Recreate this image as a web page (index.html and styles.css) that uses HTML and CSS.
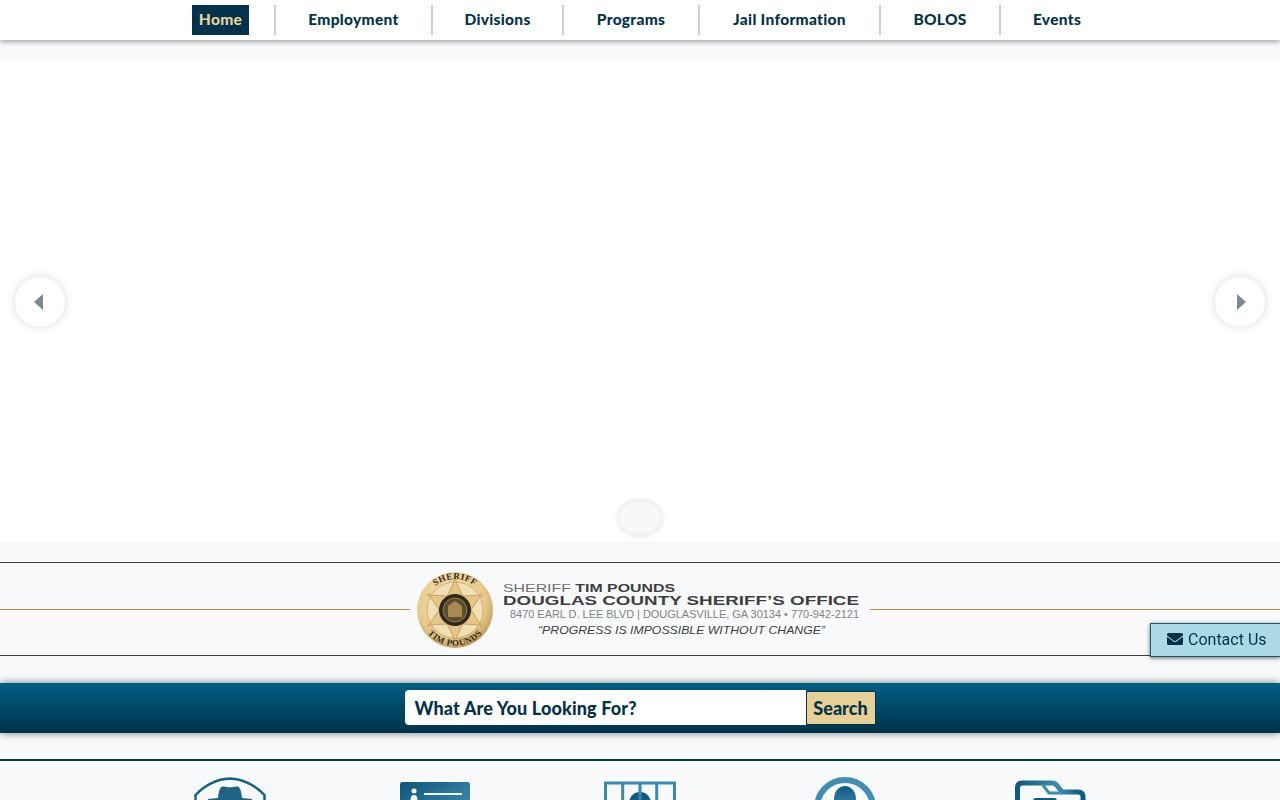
FILE: index.html
```html
<!DOCTYPE html>
<html lang="en">
<head>
    <meta charset="UTF-8">
    <meta name="viewport" content="width=device-width, initial-scale=1.0">
    <title>Douglas County Sheriff's Office</title>
    <link rel="stylesheet" href="styles.css">
</head>
<body>
    <!-- Top navigation -->
    <nav class="main-nav">
        <a class="nav-home" href="#">Home</a>
        <a class="nav-link" href="#">Employment</a>
        <a class="nav-link" href="#">Divisions</a>
        <a class="nav-link" href="#">Programs</a>
        <a class="nav-link" href="#">Jail Information</a>
        <a class="nav-link" href="#">BOLOS</a>
        <a class="nav-link" href="#">Events</a>
    </nav>

    <!-- Slider (image not loaded) -->
    <section class="slider">
        <button class="slider-btn slider-prev" type="button" aria-label="Previous"><span class="arrow-left"></span></button>
        <button class="slider-btn slider-next" type="button" aria-label="Next"><span class="arrow-right"></span></button>
        <span class="slider-dot"></span>
    </section>

    <!-- Logo banner -->
    <section class="logo-banner">
        <div class="logo-line"></div>
        <svg class="logo" width="460" height="92" viewBox="0 0 460 92">
            <defs>
                <radialGradient id="gold" cx="45%" cy="40%" r="65%">
                    <stop offset="0" stop-color="#f8e8bd"/>
                    <stop offset="0.7" stop-color="#e6ca8c"/>
                    <stop offset="1" stop-color="#b98f4e"/>
                </radialGradient>
                <path id="badgeTop" d="M14 47 A31 31 0 0 1 76 47"/>
                <path id="badgeBottom" d="M9 47 A36 36 0 0 0 81 47"/>
            </defs>
            <circle cx="45" cy="47" r="38" fill="url(#gold)"/>
            <circle cx="45" cy="47" r="28" fill="#f1e0b6" stroke="#c9a566" stroke-width="0.8"/>
            <polygon points="45,17 53,33 71,32 61,47 71,62 53,61 45,77 37,61 19,62 29,47 19,32 37,33" fill="#e5c684" stroke="#a98148" stroke-width="0.6"/>
            <circle cx="45" cy="17" r="2" fill="#d9b26b"/>
            <circle cx="71" cy="32" r="2" fill="#d9b26b"/>
            <circle cx="71" cy="62" r="2" fill="#d9b26b"/>
            <circle cx="45" cy="77" r="2" fill="#d9b26b"/>
            <circle cx="19" cy="62" r="2" fill="#d9b26b"/>
            <circle cx="19" cy="32" r="2" fill="#d9b26b"/>
            <circle cx="45" cy="47" r="16" fill="#2e2a20"/>
            <circle cx="45" cy="47" r="12" fill="#5b4d2f" stroke="#c9a566" stroke-width="0.6"/>
            <path d="M38 54 V43 L45 38 L52 43 V54 Z" fill="#a98a50"/>
            <text class="badge-text"><textPath href="#badgeTop" startOffset="50%" text-anchor="middle">SHERIFF</textPath></text>
            <text class="badge-text"><textPath href="#badgeBottom" startOffset="50%" text-anchor="middle">TIM POUNDS</textPath></text>
            <text class="logo-name" x="93" y="29" textLength="172" lengthAdjust="spacingAndGlyphs"><tspan class="logo-light">SHERIFF</tspan> TIM POUNDS</text>
            <text class="logo-office" x="93" y="42" textLength="356" lengthAdjust="spacingAndGlyphs">DOUGLAS COUNTY SHERIFF’S OFFICE</text>
            <text class="logo-address" x="100" y="55" textLength="349" lengthAdjust="spacingAndGlyphs">8470 EARL D. LEE BLVD | DOUGLASVILLE, GA 30134 • 770-942-2121</text>
            <text class="logo-motto" x="128" y="71" textLength="287" lengthAdjust="spacingAndGlyphs">“PROGRESS IS IMPOSSIBLE WITHOUT CHANGE”</text>
        </svg>
        <div class="logo-line"></div>
    </section>

    <!-- Search -->
    <section class="search-bar">
        <div class="search-input">What Are You Looking For?</div>
        <button class="search-btn" type="button">Search</button>
    </section>

    <hr class="divider">

    <!-- Quick links -->
    <section class="quick-links">
        <svg width="72" height="80" viewBox="0 0 72 80">
            <defs>
                <linearGradient id="dark" x1="0" y1="0" x2="0" y2="1">
                    <stop offset="0" stop-color="#115a7e"/>
                    <stop offset="1" stop-color="#3f8fb5"/>
                </linearGradient>
            </defs>
            <path d="M1.5 19 C12 8 24 3 36 2.5 C48 3 60 8 70.5 19 V50 C66 64 50 74 36 78 C22 74 6 64 1.5 50 Z" fill="none" stroke="#0f6488" stroke-width="2.5"/>
            <path d="M24 22 C25 12 27 10 30 10.5 C33 11.5 39 11.5 42 10.5 C45 10 47 12 48 22 L58 23 Q58 27 48 27 H24 Q14 27 14 23 Z" fill="#1f6487"/>
            <path d="M25 30 H47 V36 Q36 42 25 36 Z" fill="url(#dark)"/>
        </svg>
        <svg width="72" height="80" viewBox="0 0 72 80">
            <defs>
                <linearGradient id="card" x1="0" y1="0" x2="1" y2="1">
                    <stop offset="0" stop-color="#0f5579"/>
                    <stop offset="1" stop-color="#4b9cc3"/>
                </linearGradient>
            </defs>
            <rect x="1" y="6" width="70" height="52" rx="2.5" fill="url(#card)"/>
            <circle cx="15" cy="15" r="2.5" fill="#fff"/>
            <path d="M11.5 24 Q11.5 19 15 19 Q18.5 19 18.5 24 Z" fill="#fff"/>
            <rect x="25" y="17" width="38" height="2" fill="#fff"/>
            <rect x="25" y="29" width="38" height="2" fill="#fff"/>
        </svg>
        <svg width="72" height="80" viewBox="0 0 72 80">
            <circle cx="36" cy="27" r="11" fill="#115a7e"/>
            <path d="M1.5 66 V7 H70.5 V66 M18.7 7 V66 M36 7 V66 M52.7 7 V66" fill="none" stroke="#3a8ab0" stroke-width="3"/>
        </svg>
        <svg width="72" height="80" viewBox="0 0 72 80">
            <circle cx="36" cy="32" r="28" fill="none" stroke="#3f8fb5" stroke-width="6"/>
            <ellipse cx="36" cy="23" rx="11" ry="13" fill="url(#dark)"/>
        </svg>
        <svg width="72" height="80" viewBox="0 0 72 80">
            <defs>
                <linearGradient id="folder" x1="0" y1="0" x2="1" y2="0">
                    <stop offset="0" stop-color="#0c5a7e"/>
                    <stop offset="0.6" stop-color="#3d8db3"/>
                    <stop offset="1" stop-color="#0c5a7e"/>
                </linearGradient>
            </defs>
            <path d="M3.5 60 V12 Q3.5 7 8.5 7 H38 Q41 7 43 9.5 L48 16 H64 Q69 16 69 21 V60" fill="none" stroke="url(#folder)" stroke-width="5"/>
            <path d="M28 8 L35 17 H48" fill="none" stroke="#3d8db3" stroke-width="3"/>
            <rect x="19" y="22" width="24" height="8" rx="3" fill="#0c5a7e"/>
        </svg>
    </section>

    <!-- Floating contact tab -->
    <a class="contact-tab" href="#">
        <svg class="contact-icon" viewBox="0 0 512 512" width="16" height="16"><path d="M502.3 190.8c3.9-3.1 9.7-.2 9.7 4.7V400c0 26.5-21.5 48-48 48H48c-26.5 0-48-21.5-48-48V195.6c0-5 5.7-7.8 9.7-4.7 22.4 17.4 52.1 39.5 154.1 113.6 21.1 15.4 56.7 47.8 92.2 47.6 35.7.3 72-32.8 92.3-47.6 102-74.1 131.6-96.3 154-113.7zM256 320c23.2.4 56.6-29.2 73.4-41.4 132.7-96.3 142.8-104.7 173.4-128.7 5.8-4.5 9.2-11.5 9.2-18.9v-19c0-26.5-21.5-48-48-48H48C21.5 64 0 85.5 0 112v19c0 7.4 3.4 14.3 9.2 18.9 30.6 23.9 40.7 32.4 173.4 128.7 16.8 12.2 50.2 41.8 73.4 41.4z"/></svg>
        Contact Us
    </a>
</body>
</html>
```

FILE: styles.css
```css
html, body {
    height: 800px;
    overflow: hidden;
}

body {
    margin: 0;
    font-family: 'Lato', sans-serif;
    background-color: #f8f9fa;
    color: #03334a;
}

a {
    text-decoration: none;
}

/* Top navigation */
.main-nav {
    height: 40px;
    box-sizing: border-box;
    padding: 5px 0 5px 192px;
    background: white;
    box-shadow: 0 2px 5px rgba(0, 0, 0, 0.35);
    display: grid;
    grid-template-columns: 82px 157px 131px 136px 181px 120px 114px;
    position: relative;
}

.nav-home,
.nav-link {
    font-size: 15.5px;
    font-weight: 900;
    letter-spacing: 0.3px;
    line-height: 28px;
    color: #03334a;
}

.nav-home {
    width: 57px;
    text-align: center;
    background-color: #03334a;
    color: #e8d197;
}

.nav-link {
    border-left: 2px solid #c4d0da;
    text-align: center;
}

/* Slider */
.slider {
    position: relative;
    height: 480px;
    margin-top: 22px;
    background: white;
}

.slider-btn {
    position: absolute;
    top: 215px;
    width: 50px;
    height: 50px;
    padding: 0;
    border: none;
    border-radius: 50%;
    background: white;
    box-shadow: 0 0 10px rgba(0, 0, 0, 0.16);
    display: flex;
    align-items: center;
    justify-content: center;
}

.slider-prev {
    left: 15px;
}

.slider-next {
    right: 15px;
}

.arrow-left,
.arrow-right {
    width: 0;
    height: 0;
    border-top: 8px solid transparent;
    border-bottom: 8px solid transparent;
}

.arrow-left {
    border-right: 9px solid #7b8a8f;
    margin-right: 3px;
}

.arrow-right {
    border-left: 9px solid #7b8a8f;
    margin-left: 2px;
}

.slider-dot {
    position: absolute;
    left: 619px;
    top: 439px;
    width: 42px;
    height: 34px;
    border-radius: 50%;
    background: #f8f8f8;
    box-shadow: 0 0 6px rgba(0, 0, 0, 0.16);
}

/* Logo banner */
.logo-banner {
    margin-top: 20px;
    height: 94px;
    box-sizing: border-box;
    border-top: 1px solid #3a3f44;
    border-bottom: 1px solid #3a3f44;
    display: flex;
    align-items: center;
}

.logo-line {
    flex: 1;
    height: 1px;
    background-color: #c8873a;
}

.logo {
    display: block;
}

.logo text {
    font-family: 'Liberation Sans', sans-serif;
}

.logo .badge-text {
    font-family: 'Liberation Serif', serif;
    font-size: 9px;
    font-weight: bold;
    letter-spacing: 0.5px;
    fill: #2f2a1c;
}

.logo-name {
    font-size: 11px;
    font-weight: bold;
    fill: #3c3f42;
}

.logo-light {
    font-weight: normal;
    fill: #6d7073;
}

.logo-office {
    font-size: 12px;
    font-weight: bold;
    fill: #3c3f42;
}

.logo-address {
    font-size: 11px;
    fill: #808285;
}

.logo-motto {
    font-size: 11.5px;
    font-style: italic;
    fill: #3c3f42;
}

/* Search */
.search-bar {
    margin-top: 27px;
    height: 50px;
    box-sizing: border-box;
    padding: 7px 0 8px;
    background: linear-gradient(#005f85, #00334a);
    box-shadow: 0 0 8px rgba(0, 0, 0, 0.5);
    display: flex;
    justify-content: center;
    align-items: flex-start;
}

.search-input {
    width: 401px;
    height: 35px;
    box-sizing: border-box;
    padding-left: 10px;
    background: white;
    border-radius: 4px 0 0 4px;
    font-size: 18px;
    font-weight: 900;
    letter-spacing: 0.13px;
    line-height: 36px;
    color: #03334a;
}

.search-btn {
    width: 70px;
    height: 34px;
    margin-top: 1px;
    padding: 0;
    background-color: #e6d095;
    border: 1px solid #03334a;
    border-radius: 2px;
    font-family: 'Lato', sans-serif;
    font-size: 18px;
    font-weight: 900;
    color: #03334a;
}

.divider {
    margin: 26px 0 0;
    height: 2px;
    border: none;
    background-color: #03353f;
}

/* Quick links */
.quick-links {
    padding-top: 15px;
    display: grid;
    grid-template-columns: repeat(5, 205px);
    justify-content: center;
    justify-items: center;
}

/* Contact tab */
.contact-tab {
    position: fixed;
    right: 0;
    top: 623px;
    width: 130px;
    height: 34px;
    box-sizing: border-box;
    padding: 0 0 2px 16px;
    background-color: #add8e6;
    border: 1px solid #2c5368;
    border-right: none;
    box-shadow: 0 1px 4px rgba(0, 0, 0, 0.6);
    display: flex;
    align-items: center;
    gap: 5px;
    font-family: 'Roboto', sans-serif;
    font-size: 16px;
    color: #03334a;
}

.contact-icon {
    fill: #03334a;
}
```
